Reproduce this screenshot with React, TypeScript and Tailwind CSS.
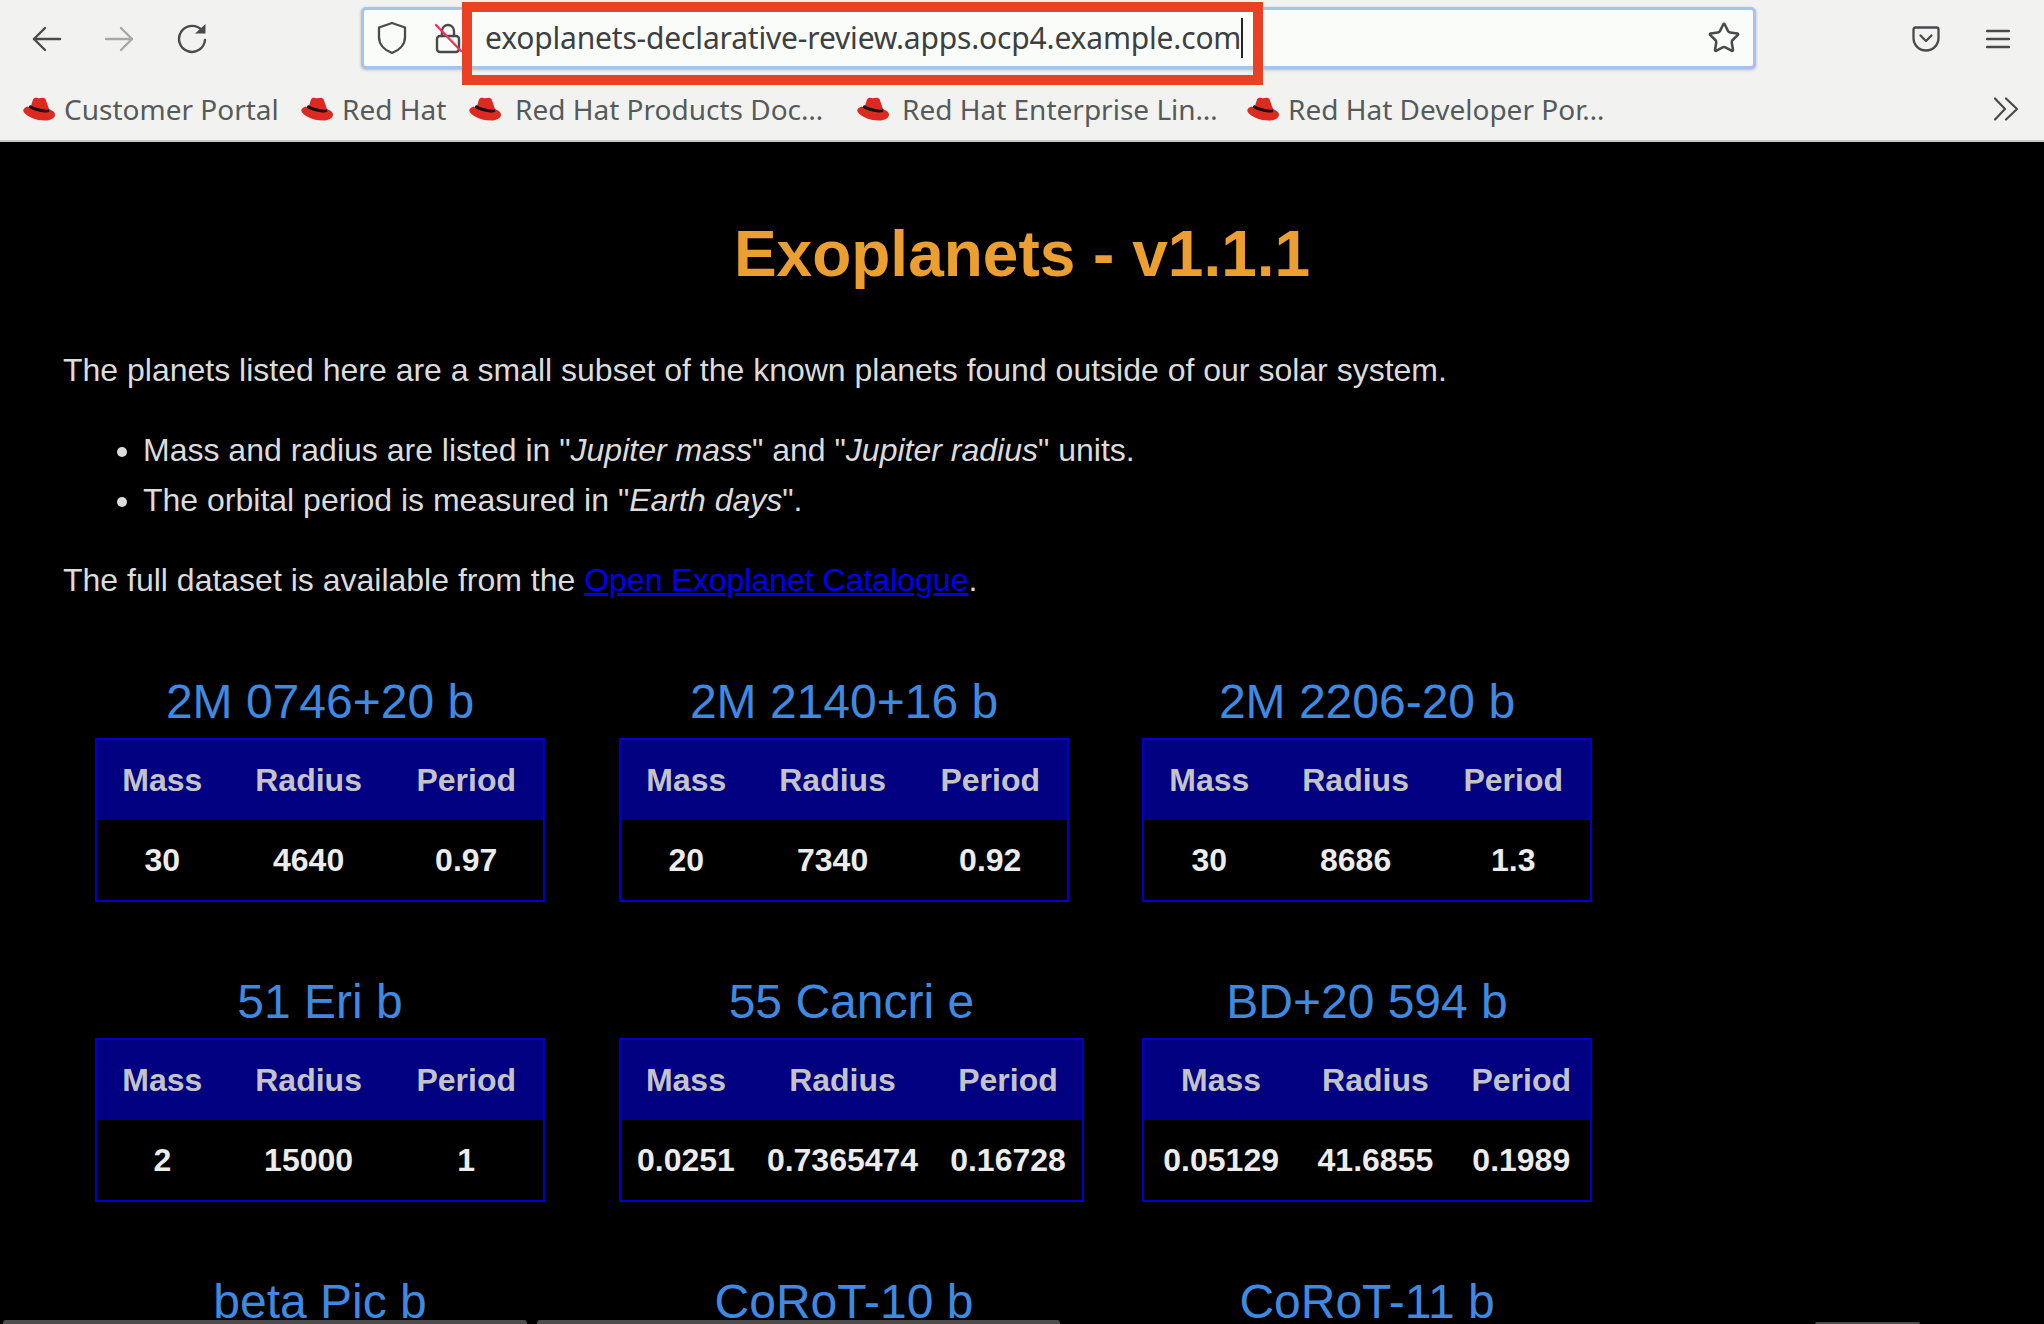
import React from 'react';
import { Star } from 'lucide-react';

type Planet = { name: string; mass: string; radius: string; period: string };

const planets: Planet[] = [
  { name: '2M 0746+20 b', mass: '30', radius: '4640', period: '0.97' },
  { name: '2M 2140+16 b', mass: '20', radius: '7340', period: '0.92' },
  { name: '2M 2206-20 b', mass: '30', radius: '8686', period: '1.3' },
  { name: '51 Eri b', mass: '2', radius: '15000', period: '1' },
  { name: '55 Cancri e', mass: '0.0251', radius: '0.7365474', period: '0.16728' },
  { name: 'BD+20 594 b', mass: '0.05129', radius: '41.6855', period: '0.1989' },
];

const bookmarks = [
  { label: 'Customer Portal', box: 'ml-0', text: 'ml-[8px] w-[213px]' },
  { label: 'Red Hat', box: 'ml-[23px]', text: 'ml-[8px] w-[102px]' },
  { label: 'Red Hat Products Doc…', box: 'ml-[24px]', text: 'ml-[13px] w-[313px]' },
  { label: 'Red Hat Enterprise Lin…', box: 'ml-[28px]', text: 'ml-[12px] w-[317px]' },
  { label: 'Red Hat Developer Por…', box: 'ml-[27px]', text: 'ml-[8px] w-[323px]' },
];

const iconStroke = '#4a4a4d';

function RedHat() {
  return (
    <svg width="34" height="26" viewBox="0 0 34 26" className="shrink-0">
      <path d="M11 3.5C13 1 15 2 17 2.3 19 1.8 21.5.8 23.5 3L27 13 8 13Z" fill="#dd2a20" />
      <path d="M6 12C10 15 20 18 28 17L27.5 13C21 14 13 12 8 9Z" fill="#1c1010" />
      <path d="M5.5 10.5C1.5 12 .5 14 2 16.5 6 21 14 24.5 23 24.5 29 24.5 33 22 33 18.5 33 16.5 31 14.5 28 13.5 28.5 15.5 27 16.5 24 16.5 18 16.5 9 14 5.5 10.5Z" fill="#dd2a20" />
    </svg>
  );
}

function Arrow({ flip, color }: { flip?: boolean; color: string }) {
  return (
    <svg width="30" height="30" viewBox="0 0 30 30" fill="none" stroke={color} strokeWidth="2.4" strokeLinecap="round" strokeLinejoin="round" className={flip ? 'rotate-180' : ''}>
      <path d="M2 15H28" />
      <path d="M13 4L2 15 13 26" />
    </svg>
  );
}

function Reload() {
  return (
    <svg width="30" height="32" viewBox="0 0 30 32" fill="none" className="shrink-0">
      <path d="M25 7.5A13 13 0 1 0 28 17" stroke={iconStroke} strokeWidth="2.4" strokeLinecap="round" />
      <path d="M18 10.5H28.5V1Z" fill={iconStroke} />
    </svg>
  );
}

function ShieldIcon() {
  return (
    <svg width="30" height="34" viewBox="0 0 30 34" fill="none" stroke={iconStroke} strokeWidth="2.3" strokeLinejoin="round">
      <path d="M15 2L28 6.5V16C28 24 22 29.5 15 32 8 29.5 2 24 2 16V6.5Z" />
    </svg>
  );
}

function PocketIcon() {
  return (
    <svg width="28" height="26" viewBox="0 0 28 26" fill="none" stroke={iconStroke} strokeWidth="2.3" strokeLinecap="round" strokeLinejoin="round">
      <path d="M3.5 1.5H24.5Q26.5 1.5 26.5 3.5V12C26.5 19 21 24.5 14 24.5S1.5 19 1.5 12V3.5Q1.5 1.5 3.5 1.5Z" />
      <path d="M8.5 9.5L14 15 19.5 9.5" />
    </svg>
  );
}

function MenuIcon() {
  return (
    <svg width="24" height="20" viewBox="0 0 24 20" fill="none" stroke={iconStroke} strokeWidth="2.3" strokeLinecap="round">
      <path d="M1 2H23M1 10H23M1 18H23" />
    </svg>
  );
}

function MoreIcon() {
  return (
    <svg width="26" height="24" viewBox="0 0 26 24" fill="none" stroke={iconStroke} strokeWidth="2.2" strokeLinecap="round" strokeLinejoin="round">
      <path d="M2 1.5L12 12 2 22.5" />
      <path d="M13 1.5L24 12 13 22.5" />
    </svg>
  );
}

function InsecureLock() {
  return (
    <svg width="28" height="32" viewBox="0 0 28 32" fill="none" strokeLinecap="round">
      <path d="M8 14V9a6 6 0 0 1 12 0v5" stroke={iconStroke} strokeWidth="2.4" />
      <rect x="3" y="14" width="22" height="16" rx="3" stroke={iconStroke} strokeWidth="2.4" />
      <path d="M2 3L27 29" stroke="#e8365d" strokeWidth="2.4" />
    </svg>
  );
}

function PlanetCard({ planet }: { planet: Planet }) {
  return (
    <div className="w-fit">
      <h2 className="mb-[10px] text-center text-[48px] leading-[52px] font-normal text-[#3f8ae0]">{planet.name}</h2>
      <table className="min-w-[450px] border-separate border-spacing-0 border-2 border-[#0000cd] text-center text-[32px] leading-[36px] font-bold">
        <thead>
          <tr className="bg-[#000080] text-[#c4c4c8]">
            <th className="px-4 py-[22px]">Mass</th>
            <th className="px-4 py-[22px]">Radius</th>
            <th className="px-4 py-[22px]">Period</th>
          </tr>
        </thead>
        <tbody>
          <tr className="text-[#ececec]">
            <td className="px-4 py-[22px]">{planet.mass}</td>
            <td className="px-4 py-[22px]">{planet.radius}</td>
            <td className="px-4 py-[22px]">{planet.period}</td>
          </tr>
        </tbody>
      </table>
    </div>
  );
}

export default function App() {
  return (
    <div className="relative h-[1324px] w-[2044px] overflow-hidden bg-black font-['Liberation_Sans',sans-serif]">
      {/* Browser chrome */}
      <div className="h-[142px] border-b-2 border-[#c8c8c8] bg-[#f2f3f1] font-['Noto_Sans',sans-serif] text-[#555a5a]">
        <div className="flex h-[77px] items-center pl-[32px] pr-[30px]">
          <Arrow color={iconStroke} />
          <div className="ml-[42px]"><Arrow flip color="#a8a8aa" /></div>
          <div className="ml-[43px]"><Reload /></div>
          <div className="ml-[154px] -mt-px flex h-[62px] w-[1395px] shrink-0 items-center rounded-[5px] border-[3px] border-[#a6c3ee] bg-[#fafcf9] pl-[13px] pr-[12px] shadow-[0_1px_3px_rgba(0,0,0,0.25)]">
            <ShieldIcon />
            <div className="ml-[27px]"><InsecureLock /></div>
            <span className="ml-[23px] whitespace-nowrap text-[30px] leading-none tracking-[-0.18px] text-[#3c4040]">exoplanets-declarative-review.apps.ocp4.example.com</span>
            <span className="h-[40px] w-[2px] bg-[#222]" />
            <Star className="ml-auto h-[34px] w-[34px] text-[#4a4a4d]" strokeWidth={1.8} />
          </div>
          <div className="ml-[156px]"><PocketIcon /></div>
          <div className="ml-[46px]"><MenuIcon /></div>
        </div>
        <div className="flex h-[63px] items-center pl-[22px] pr-[25px] text-[28px]">
          {bookmarks.map((b) => (
            <div key={b.label} className={`flex items-center ${b.box}`}>
              <RedHat />
              <span className={`whitespace-nowrap leading-[40px] ${b.text}`}>{b.label}</span>
            </div>
          ))}
          <div className="ml-auto"><MoreIcon /></div>
        </div>
      </div>

      {/* Annotation */}
      <div className="absolute left-[462px] top-[2px] h-[83px] w-[801px] border-[10px] border-[#e94026]" />

      {/* Page */}
      <main className="px-[63px] text-[32px] leading-[50px] text-[#dcdcdc]">
        <h1 className="mt-[73px] text-center text-[64px] leading-[78px] font-bold text-[#eb9f30]">Exoplanets - v1.1.1</h1>
        <p className="mt-[52px]">The planets listed here are a small subset of the known planets found outside of our solar system.</p>
        <ul className="mt-[30px] list-disc pl-[80px]">
          <li>Mass and radius are listed in "<em>Jupiter mass</em>" and "<em>Jupiter radius</em>" units.</li>
          <li>The orbital period is measured in "<em>Earth days</em>".</li>
        </ul>
        <p className="mt-[30px]">The full dataset is available from the <a className="text-[#0000ee] underline" href="#">Open Exoplanet Catalogue</a>.</p>
        <div className="ml-[32px] mt-[71px] grid grid-cols-[524px_523px_1fr] justify-items-start gap-y-[74px]">
          {planets.map((p) => <PlanetCard key={p.name} planet={p} />)}
          <h2 className="w-[450px] text-center text-[48px] leading-[52px] text-[#3f8ae0]">beta Pic b</h2>
          <h2 className="w-[450px] text-center text-[48px] leading-[52px] text-[#3f8ae0]">CoRoT-10 b</h2>
          <h2 className="w-[450px] text-center text-[48px] leading-[52px] text-[#3f8ae0]">CoRoT-11 b</h2>
        </div>
      </main>

      {/* Window edge tabs at the bottom */}
      <div className="absolute bottom-0 left-[3px] h-[4px] w-[524px] rounded-t-[3px] bg-[#4d4d4d]" />
      <div className="absolute bottom-0 left-[537px] h-[4px] w-[523px] rounded-t-[3px] bg-[#4d4d4d]" />
      <div className="absolute bottom-0 left-[1815px] h-[2px] w-[105px] rounded-t-[3px] bg-[#4d4d4d]" />
    </div>
  );
}
